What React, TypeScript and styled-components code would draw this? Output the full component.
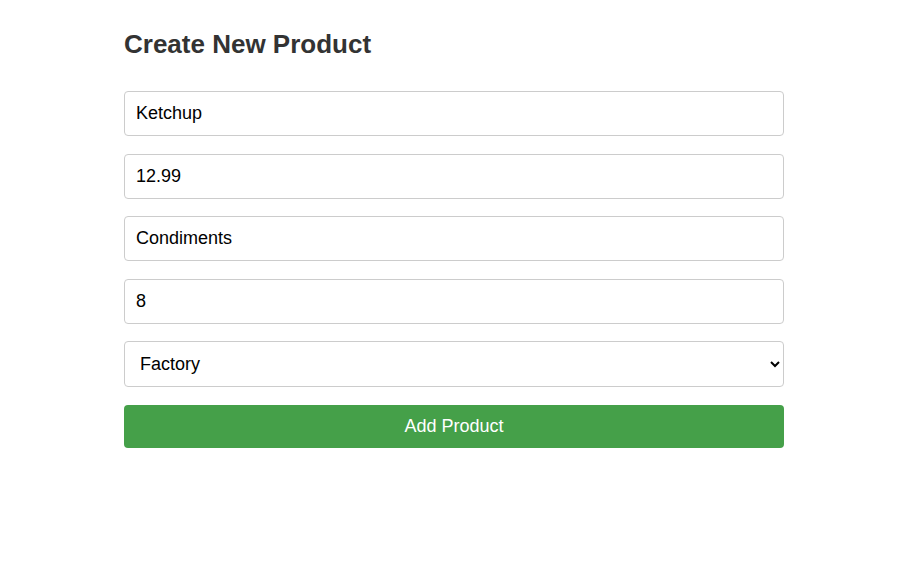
import React, { useState } from "react";
import styled, { createGlobalStyle } from "styled-components";

const GlobalStyle = createGlobalStyle`
  body {
    margin: 0;
    background: #ffffff;
    font-family: "Liberation Sans", Arial, sans-serif;
  }
`;

const Page = styled.div`
  width: 660px;
  padding: 20px 0 0 124px;
`;

const Title = styled.h2`
  margin: 9px 0 32px;
  font-size: 26px;
  font-weight: 700;
  color: #333333;
  line-height: 30px;
`;

const Form = styled.form`
  display: flex;
  flex-direction: column;
  gap: 17.5px;
`;

const Field = styled.input`
  box-sizing: border-box;
  width: 100%;
  height: 45px;
  padding: 0 11px;
  font-family: "Liberation Sans", Arial, sans-serif;
  font-size: 18px;
  color: #000000;
  border: 1px solid #cccccc;
  border-radius: 4px;
  outline: none;
`;

const Select = styled.select`
  box-sizing: border-box;
  width: 100%;
  height: 46px;
  padding: 0 11px;
  font-family: "Liberation Sans", Arial, sans-serif;
  font-size: 18px;
  color: #000000;
  background: #ffffff;
  border: 1px solid #cccccc;
  border-radius: 4px;
  outline: none;
`;

const SubmitButton = styled.button`
  height: 43px;
  width: 100%;
  border: none;
  border-radius: 4px;
  background: #45a049;
  color: #ffffff;
  font-family: "Liberation Sans", Arial, sans-serif;
  font-size: 18px;
  cursor: pointer;
  &:hover {
    opacity: 0.9;
  }
`;

export default function App() {
  const [name, setName] = useState("Ketchup");
  const [price, setPrice] = useState("12.99");
  const [category, setCategory] = useState("Condiments");
  const [qty, setQty] = useState("8");
  const [source, setSource] = useState("Factory");

  return (
    <>
      <GlobalStyle />
      <Page>
        <Title>Create New Product</Title>
        <Form onSubmit={(e) => e.preventDefault()}>
          <Field value={name} onChange={(e) => setName(e.target.value)} />
          <Field value={price} onChange={(e) => setPrice(e.target.value)} />
          <Field value={category} onChange={(e) => setCategory(e.target.value)} />
          <Field value={qty} onChange={(e) => setQty(e.target.value)} />
          <Select value={source} onChange={(e) => setSource(e.target.value)}>
            <option>Factory</option>
            <option>Warehouse</option>
            <option>Supplier</option>
          </Select>
          <SubmitButton type="submit">Add Product</SubmitButton>
        </Form>
      </Page>
    </>
  );
}
